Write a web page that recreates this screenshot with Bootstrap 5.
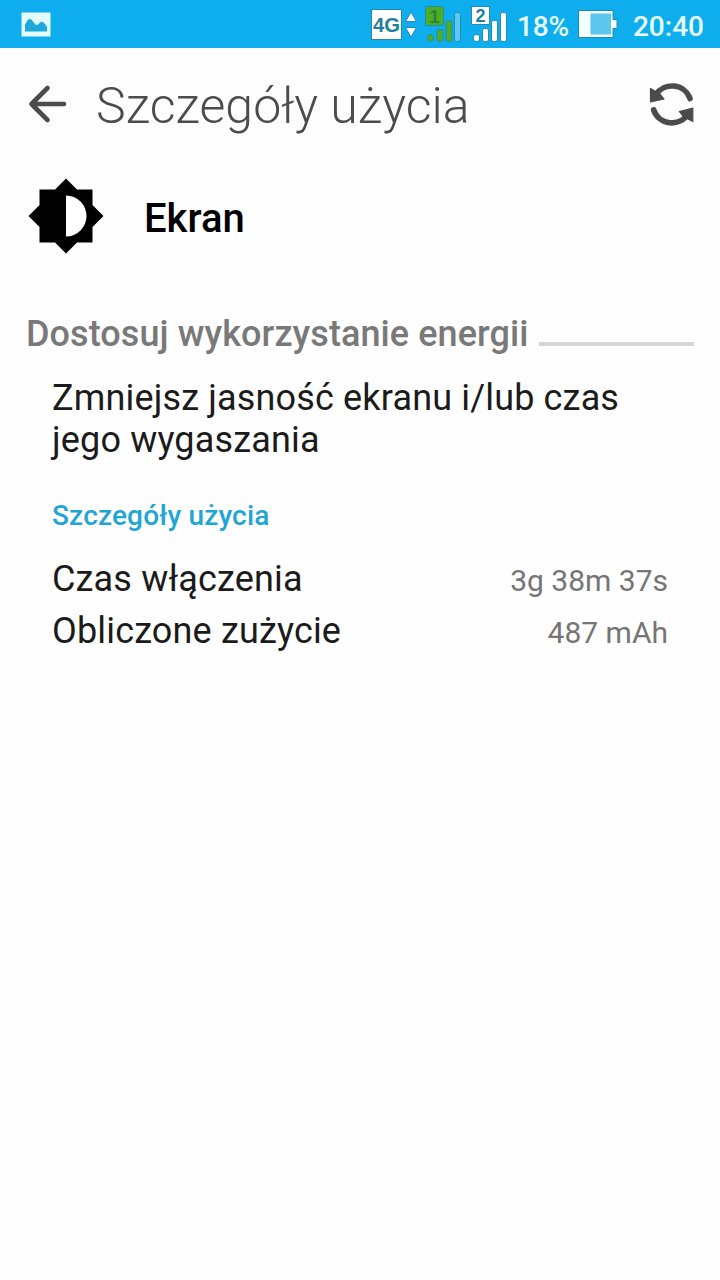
<!DOCTYPE html>
<html lang="pl">
<head>
<meta charset="utf-8">
<meta name="viewport" content="width=device-width, initial-scale=1">
<title>Szczegóły użycia</title>
<link rel="stylesheet" href="https://cdn.jsdelivr.net/npm/bootstrap@5.3.0/dist/css/bootstrap.min.css">
<style>
  body { font-family: Roboto, "Noto Sans", sans-serif; background: #fefefe; color: #1b1b1b; min-height: 1280px; overflow: hidden; }
  svg { display: block; flex: none; }
  .status-bar { height: 48px; background: #0eaeee; color: #e6fdff; font-size: 28px; line-height: 44px; padding: 0 16px 0 21px; }
  .status-bar span { padding-top: 5px; }
  .status-bar .chip { font-family: "Liberation Sans", sans-serif; font-weight: 700; }
  .percent { width: 52px; margin-left: 9px; font-weight: 500; letter-spacing: -.2px; }
  .battery { margin-left: 9px; margin-right: 15px; }
  .clock { font-weight: 500; }
  .app-bar { height: 112px; padding: 0 26px 0 28px; background: #fdfdfd; }
  .app-title { font-size: 50px; font-weight: 300; line-height: 60px; color: #4c4c4c; margin: 3px 0 0 28px; letter-spacing: .04px; }
  .app-entry { height: 112px; padding-left: 28px; }
  .app-name { font-size: 40px; font-weight: 500; line-height: 48px; color: #000; margin: 6px 0 0 40px; }
  .section-head { height: 60px; padding: 0 26px; margin-top: 32px; }
  .section-title { font-size: 36px; font-weight: 500; line-height: 60px; letter-spacing: .08px; color: #797979; }
  .section-rule { height: 4px; background: #d5d5d5; margin: 19px 0 0 10px; }
  .details { padding: 13px 52px 0; font-size: 36px; line-height: 42px; letter-spacing: .16px; }
  .subhead { font-size: 28px; font-weight: 500; line-height: 34px; color: #1fa6d4; margin-top: 38px; }
  .stat { height: 52px; line-height: 52px; }
  .stat-value { font-size: 30px; letter-spacing: 0; color: #757575; padding-top: 2px; }
</style>
</head>
<body>
<header>
  <div class="status-bar d-flex align-items-center">
    <svg width="30" height="25" viewBox="0 0 30 25"><rect x=".5" y=".5" width="29" height="24" fill="#e4fcff"/><path d="M4 19.500V12.500q1-1 2-3.500 3-4 6 .5l3 3.500q2 0 4-2.500 2.500-2 4.500 1l2.500 3v5z" fill="#1ea9dc"/></svg>
    <svg class="ms-auto chip" width="138" height="38" viewBox="370 5 138 38">
      <g stroke="#258aad" stroke-width="1">
        <rect x="371.500" y="9.500" width="30" height="30" fill="#fff"/>
        <path d="M411 12l5.500 9.500h-11zM411 37l5.500-9.500h-11z" fill="#fff"/>
        <g fill="#4caf22"><rect x="425.500" y="6.500" width="18" height="19" rx="1"/><rect x="427.500" y="34.500" width="6" height="7" rx="3"/><rect x="437" y="29.500" width="6" height="12" rx="2"/><rect x="446" y="20.500" width="6" height="21" rx="2"/></g>
        <rect x="454.500" y="12.500" width="6" height="29" rx="2" fill="#5cc9f5"/>
        <g fill="#fff"><rect x="471.500" y="6.500" width="18" height="18"/><rect x="473.500" y="34.500" width="6" height="7" rx="2.500"/><rect x="482.500" y="28.500" width="6" height="13" rx="2"/><rect x="491.500" y="20.500" width="6" height="21" rx="2"/><rect x="500.500" y="12.500" width="6" height="29" rx="2"/></g>
      </g>
      <text x="373" y="31.500" font-size="20" textLength="27" lengthAdjust="spacingAndGlyphs" fill="#23809c">4G</text>
      <text x="434.500" y="22.500" font-size="18" text-anchor="middle" fill="#2b7f45">1</text>
      <text x="480.500" y="22" font-size="18" text-anchor="middle" fill="#23809c">2</text>
    </svg>
    <span class="percent">18%</span>
    <svg class="battery" width="40" height="28" viewBox="0 0 40 28"><path d="M.5.500h34.500v9h4v9h-4v9H.5z" fill="#f4ffff" stroke="#258aad"/><path d="M12.500 3.500H33v21H12.500z" fill="#5bc7ef"/></svg>
    <span class="clock">20:40</span>
  </div>
  <nav class="app-bar d-flex align-items-center" aria-label="Pasek aplikacji">
    <svg width="40" height="40" viewBox="0 0 40 40" fill="none" stroke="#4b4b4b" stroke-width="4.600" stroke-linecap="round" stroke-linejoin="round"><path d="M19.500 4L3.500 20l16 16M3.500 20H36"/></svg>
    <h1 class="app-title">Szczegóły użycia</h1>
    <svg class="ms-auto" width="46" height="46" viewBox="648 81 46 46" fill="none" stroke="#4b4b4b" stroke-width="5.600" stroke-linecap="round"><path d="M656 94.500A19 18.500 0 0 1 690 98.500M653.700 110A19 18.500 0 0 0 688 114"/><path d="M650.500 88.500v13.500l13.500-3-4-5zM692.800 121.500V108l-13.500 3.500 4 5z" fill="#4b4b4b" stroke-width="1.200" stroke-linejoin="round"/></svg>
  </nav>
</header>
<main>
  <section class="app-entry d-flex align-items-center">
    <svg width="76" height="76" viewBox="0 0 76 76"><path d="M38 .5l11 11h15.500V27l11 11-11 11v15.500H49l-11 11-11-11H11.500V49L.5 38l11-11V11.500H27z"/><path d="M38 17.500a20.500 20.500 0 0 1 0 41z" fill="#fff"/></svg>
    <h2 class="app-name">Ekran</h2>
  </section>
  <div class="section-head d-flex align-items-center">
    <h2 class="section-title mb-0">Dostosuj wykorzystanie energii</h2>
    <div class="section-rule flex-grow-1"></div>
  </div>
  <section class="details">
    <p class="mb-0">Zmniejsz jasność ekranu i/lub czas jego wygaszania</p>
    <h3 class="subhead mb-3 pb-1">Szczegóły użycia</h3>
    <div class="stat d-flex justify-content-between"><span>Czas włączenia</span><span class="stat-value">3g 38m 37s</span></div>
    <div class="stat d-flex justify-content-between"><span>Obliczone zużycie</span><span class="stat-value">487 mAh</span></div>
  </section>
</main>
<script src="https://cdn.jsdelivr.net/npm/bootstrap@5.3.0/dist/js/bootstrap.bundle.min.js"></script>
</body>
</html>
